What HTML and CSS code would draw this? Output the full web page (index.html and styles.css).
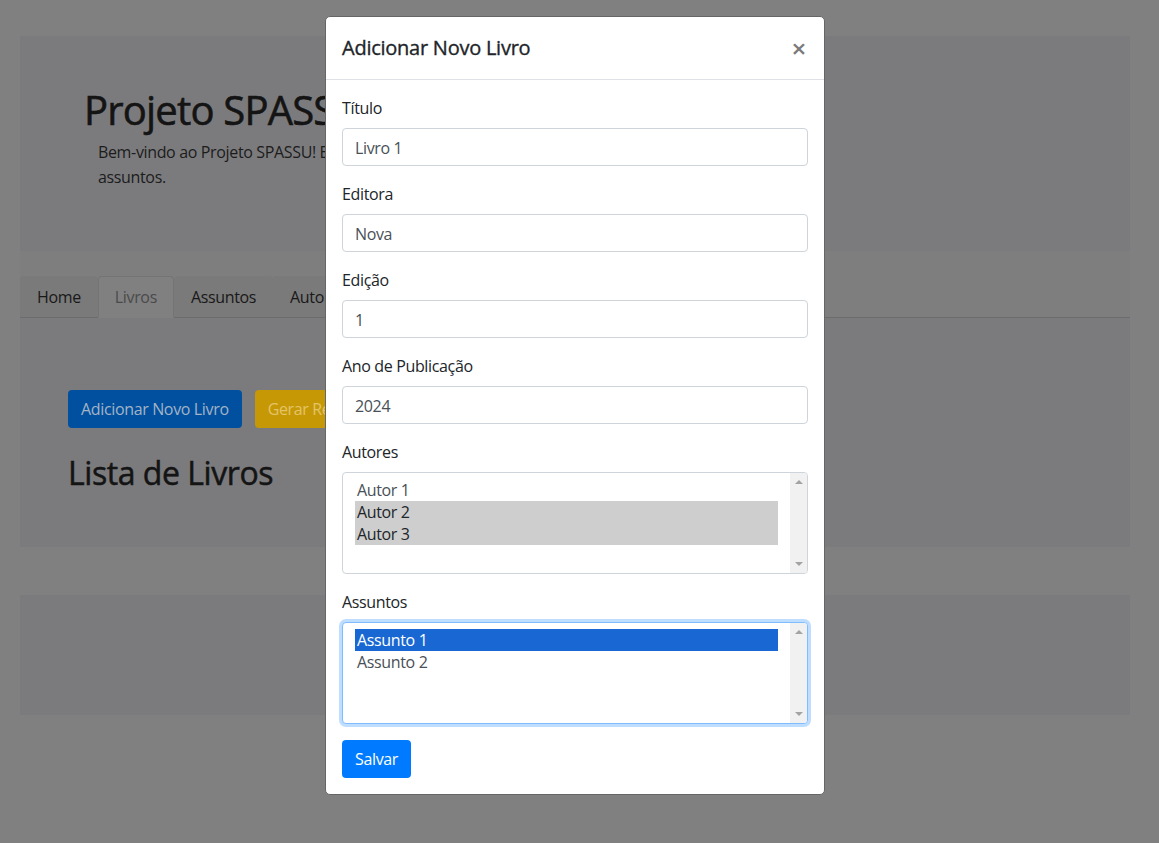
FILE: index.html
```html
<!DOCTYPE html>
<html lang="pt-BR">
<head>
<meta charset="utf-8">
<title>Projeto SPASSU</title>
<link rel="stylesheet" href="styles.css">
</head>
<body>
<div class="page">
  <section class="jumbotron">
    <h1 class="jumbo-title">Projeto SPASSU</h1>
    <p class="jumbo-text">Bem-vindo ao Projeto SPASSU! Este sistema permite o cadastro e a gestão de livros, autores e<br>assuntos.</p>
  </section>
  <div class="tabs-band">
    <ul class="tabs">
      <li class="tab">Home</li>
      <li class="tab tab-active">Livros</li>
      <li class="tab">Assuntos</li>
      <li class="tab">Autores</li>
    </ul>
  </div>
  <section class="content">
    <div class="actions">
      <span class="btn btn-primary-dim">Adicionar Novo Livro</span>
      <span class="btn btn-warning-dim">Gerar Relatório</span>
    </div>
    <h2 class="list-title">Lista de Livros</h2>
  </section>
  <section class="footer-box"></section>
</div>

<div class="modal">
  <div class="modal-header">
    <h5 class="modal-title">Adicionar Novo Livro</h5>
    <span class="close">&times;</span>
  </div>
  <div class="modal-body">
    <div class="form-group">
      <label class="label">Título</label>
      <div class="input">Livro 1</div>
    </div>
    <div class="form-group">
      <label class="label">Editora</label>
      <div class="input">Nova</div>
    </div>
    <div class="form-group">
      <label class="label">Edição</label>
      <div class="input">1</div>
    </div>
    <div class="form-group">
      <label class="label">Ano de Publicação</label>
      <div class="input">2024</div>
    </div>
    <div class="form-group">
      <label class="label">Autores</label>
      <div class="listbox" role="listbox">
        <div class="lb-items">
          <div class="lb-opt">Autor 1</div>
          <div class="lb-opt lb-sel">Autor 2</div>
          <div class="lb-opt lb-sel">Autor 3</div>
        </div>
        <div class="lb-scroll">
          <span class="arrow-up"></span>
          <span class="arrow-down"></span>
        </div>
      </div>
    </div>
    <div class="form-group">
      <label class="label">Assuntos</label>
      <div class="listbox listbox-focus" role="listbox">
        <div class="lb-items">
          <div class="lb-opt lb-sel-focus">Assunto 1</div>
          <div class="lb-opt">Assunto 2</div>
        </div>
        <div class="lb-scroll">
          <span class="arrow-up"></span>
          <span class="arrow-down"></span>
        </div>
      </div>
    </div>
    <span class="btn btn-primary">Salvar</span>
  </div>
</div>
</body>
</html>
```

FILE: styles.css
```css
* { box-sizing: border-box; }
html, body { margin: 0; padding: 0; }
body {
  background: #808080;
  font-family: "Open Sans", "Noto Sans", sans-serif;
  font-size: 16px;
  line-height: 24px;
  letter-spacing: -0.35px;
  color: #141414;
  width: 1159px;
  height: 843px;
  overflow: hidden;
  position: relative;
}

/* background page */
.page { padding: 36px 29px 0 20px; }
.jumbotron {
  height: 215px;
  background: #7b7b7d;
  padding: 50px 0 0 64px;
}
.jumbo-title {
  margin: 0 0 6px;
  font-size: 40px;
  line-height: 48px;
  font-weight: 400;
  -webkit-text-stroke: 0.6px currentColor;
  letter-spacing: -0.8px;
  color: #141414;
}
.jumbo-text {
  margin: 0 0 0 14px;
  font-size: 16px;
  line-height: 25px;
  color: #1c1c1c;
  white-space: nowrap;
}
.tabs-band {
  background: #7e7e7f;
  padding-top: 25px;
}
.tabs {
  list-style: none;
  margin: 0;
  padding: 0;
  display: flex;
  border-bottom: 1px solid #6c6c6c;
  height: 42px;
}
.tab {
  padding: 8px 16px;
  height: 41px;
  background: #7a7a7a;
  color: #181818;
  border: 1px solid transparent;
  border-radius: 4px 4px 0 0;
}
.tab-active {
  background: #808081;
  color: #4a4a4a;
  border-color: #747474 #747474 #808081;
  height: 42px;
}
.content {
  height: 229px;
  background: #7b7b7d;
  padding: 72px 48px 0;
}
.actions { display: flex; gap: 13px; }
.btn {
  display: inline-block;
  padding: 6px 12px;
  line-height: 24px;
  font-size: 16px;
  border-radius: 4px;
  border: 1px solid transparent;
  white-space: nowrap;
}
.btn-primary-dim { background: #00509f; color: #a4b3c6; }
.btn-warning-dim { background: #c79806; color: #e3c467; }
.list-title {
  margin: 26px 0 0;
  font-size: 32px;
  line-height: 38px;
  font-weight: 400;
  -webkit-text-stroke: 0.5px currentColor;
  letter-spacing: -0.45px;
  color: #141414;
}
.footer-box {
  margin-top: 48px;
  height: 120px;
  background: #7b7b7d;
}

/* modal */
.modal {
  position: absolute;
  top: 16px;
  left: 325px;
  width: 500px;
  background: #fff;
  border: 1px solid #666;
  border-radius: 5px;
  color: #212529;
}
.modal-header {
  display: flex;
  align-items: flex-start;
  justify-content: space-between;
  padding: 16px;
  border-bottom: 1px solid #dee2e6;
}
.modal-title {
  margin: 0;
  font-size: 20px;
  line-height: 30px;
  font-weight: 400;
  -webkit-text-stroke: 0.35px currentColor;
  letter-spacing: -0.25px;
  color: #212529;
}
.close {
  font-size: 26px;
  font-weight: 600;
  line-height: 30px;
  color: #7a7a7a;
  margin-right: 2px;
}
.modal-body { padding: 16px; }
.form-group { margin-bottom: 16px; }
.label {
  display: block;
  margin-bottom: 8px;
  color: #212529;
}
.input {
  height: 38px;
  padding: 7px 12px 5px;
  border: 1px solid #ced4da;
  border-radius: 4px;
  color: #495057;
  background: #fff;
}
.listbox {
  display: flex;
  height: 102px;
  border: 1px solid #ced4da;
  border-radius: 4px;
  overflow: hidden;
  background: #fff;
}
.listbox-focus {
  border-color: #80bdff;
  box-shadow: 0 0 0 3px rgba(0, 123, 255, .25);
}
.lb-items {
  flex: 1;
  padding: 6px 12px;
}
.lb-opt {
  height: 22px;
  line-height: 23px;
  padding: 0 2px;
  color: #495057;
}
.lb-sel { background: #cecece; color: #212529; }
.lb-sel-focus { background: #1967d2; color: #fff; }
.lb-scroll {
  width: 17px;
  background: #f1f1f1;
  display: flex;
  flex-direction: column;
  justify-content: space-between;
  align-items: center;
  padding: 7px 0;
}
.arrow-up, .arrow-down {
  width: 0;
  height: 0;
  border-left: 4px solid transparent;
  border-right: 4px solid transparent;
}
.arrow-up { border-bottom: 4px solid #a3a3a3; }
.arrow-down { border-top: 4px solid #a3a3a3; }
.btn-primary { background: #007bff; color: #fff; }
```
